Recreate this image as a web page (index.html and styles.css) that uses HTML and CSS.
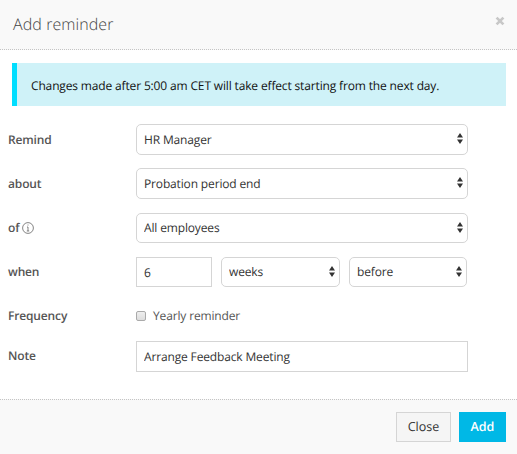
FILE: index.html
```
<!DOCTYPE html>
<html lang="en">

<head>
    <meta charset="UTF-8">
    <meta name="viewport" content="width=device-width, initial-scale=1.0">
    <title>Add reminder</title>
    <link rel="stylesheet" href="styles.css">
</head>

<body>
    <form class="modal">
        <div class="modal-header">
            <h1 class="modal-title">Add reminder</h1>
            <button type="button" class="modal-close" aria-label="Close">
                <svg width="10" height="10" viewBox="0 0 10 10"><path d="M1.6 1.6L8.4 8.4M8.4 1.6L1.6 8.4" stroke="#c8c8c8" stroke-width="2.7"/></svg>
            </button>
        </div>

        <div class="modal-body">
            <div class="alert">Changes made after 5:00 am CET will take effect starting from the next day.</div>

            <div class="row">
                <label class="label" for="remind">Remind</label>
                <div class="select">
                    <select id="remind"><option>HR Manager</option></select>
                    <svg class="arrows" width="6" height="11" viewBox="0 0 6 11"><path d="M0 4.5L3 0L6 4.5ZM0 6.5L3 11L6 6.5Z"/></svg>
                </div>
            </div>
            <div class="row row-about">
                <label class="label" for="about">about</label>
                <div class="select">
                    <select id="about"><option>Probation period end</option></select>
                    <svg class="arrows" width="6" height="11" viewBox="0 0 6 11"><path d="M0 4.5L3 0L6 4.5ZM0 6.5L3 11L6 6.5Z"/></svg>
                </div>
            </div>
            <div class="row row-short">
                <label class="label" for="of">of
                    <svg class="info" width="12" height="12" viewBox="0 0 12 12"><circle cx="6" cy="6" r="5.4"/><path d="M5 5H6V9M4.8 9H7.2M5.5 3H6.5"/></svg>
                </label>
                <div class="select">
                    <select id="of"><option>All employees</option></select>
                    <svg class="arrows" width="6" height="11" viewBox="0 0 6 11"><path d="M0 4.5L3 0L6 4.5ZM0 6.5L3 11L6 6.5Z"/></svg>
                </div>
            </div>
            <div class="row row-short">
                <label class="label" for="when">when</label>
                <div class="when">
                    <input type="text" class="input input-number" id="when" value="6">
                    <div class="select select-unit">
                        <select><option>weeks</option></select>
                        <svg class="arrows" width="6" height="11" viewBox="0 0 6 11"><path d="M0 4.5L3 0L6 4.5ZM0 6.5L3 11L6 6.5Z"/></svg>
                    </div>
                    <div class="select select-side">
                        <select><option>before</option></select>
                        <svg class="arrows" width="6" height="11" viewBox="0 0 6 11"><path d="M0 4.5L3 0L6 4.5ZM0 6.5L3 11L6 6.5Z"/></svg>
                    </div>
                </div>
            </div>
            <div class="row row-frequency">
                <span class="label">Frequency</span>
                <label class="check"><input type="checkbox">Yearly reminder</label>
            </div>
            <div class="row row-note">
                <label class="label" for="note">Note</label>
                <input type="text" class="input" id="note" value="Arrange Feedback Meeting">
            </div>
        </div>

        <div class="modal-footer">
            <button type="button" class="btn">Close</button>
            <button type="button" class="btn btn-primary">Add</button>
        </div>
    </form>
</body>

</html>
```
FILE: styles.css
```
* {
    box-sizing: border-box;
}

body {
    margin: 0;
    background: #fff;
    color: #555;
    font-family: "Open Sans", sans-serif;
    font-size: 12px;
    letter-spacing: -0.15px;
    text-rendering: geometricPrecision;
}

input,
select,
button {
    margin: 0;
    font-family: inherit;
    font-size: 12px;
    letter-spacing: inherit;
    text-rendering: inherit;
}

.modal {
    display: flex;
    flex-direction: column;
    height: 454px;
}

.modal-header {
    display: flex;
    justify-content: space-between;
    height: 50px;
    padding: 12px 12px 0 13px;
    background: #f9f9f9;
    border-bottom: 1px dotted #c4c4c4;
}

.modal-title {
    margin: 0;
    color: #444;
    font-size: 16px;
    font-weight: 300;
    letter-spacing: 0.08px;
    line-height: 24px;
}

.modal-close {
    height: 10px;
    margin-top: 4px;
    padding: 0;
    border: none;
    background: none;
    line-height: 0;
}

.modal-body {
    flex: 1;
    padding: 13px 11px 0 8px;
}

.alert {
    height: 43px;
    margin: 0 0 18px 4px;
    padding-left: 14px;
    border-left: 5px solid #00deff;
    background: #cff2f8;
    color: #111;
    line-height: 45px;
}

.row {
    display: grid;
    grid-template-columns: 128px 332px;
    align-items: start;
    height: 44px;
}

.row-about {
    height: 45px;
}

.row-frequency {
    height: 40px;
}

.label {
    font-weight: 600;
    line-height: 31px;
}

.row-short .label,
.row-note .label {
    line-height: 29px;
}

.row-frequency .label,
.check {
    line-height: 30px;
}

.info {
    vertical-align: -2px;
    fill: none;
    stroke: #666;
    stroke-width: 0.8;
}

.select {
    position: relative;
    height: 31px;
}

.row-short .select {
    height: 30px;
}

.select select {
    appearance: none;
    display: block;
    width: 100%;
    height: 100%;
    padding: 0 7px;
    border: 1px solid #d5d5d5;
    border-radius: 5px;
    background: #fff;
    color: #333;
}

.row-short .select select {
    padding-bottom: 1px;
}

.arrows {
    position: absolute;
    top: 9px;
    right: 5px;
    fill: #333;
}

.when {
    display: flex;
}

.select-unit {
    width: 119px;
    margin: 0 9px;
}

.select-side {
    width: 118px;
}

.input {
    width: 100%;
    height: 31px;
    padding: 0 7px;
    border: 1px solid #d5d5d5;
    color: #333;
}

.input-number {
    width: 76px;
    height: 30px;
}

.check {
    display: flex;
    align-items: center;
}

.check input {
    appearance: none;
    width: 10px;
    height: 10px;
    margin-right: 7px;
    border: 1px solid #aaa;
    border-radius: 2px;
    background: linear-gradient(#eee, #ddd);
}

.modal-footer {
    display: flex;
    justify-content: flex-end;
    gap: 8px;
    height: 55px;
    padding: 12px 11px 0;
    background: #f9f9f9;
    border-top: 1px dotted #c4c4c4;
}

.btn {
    width: 55px;
    height: 30px;
    padding: 0 0 2px;
    border: 1px solid #d5d5d5;
    background: #f5f5f5;
    color: #333;
    font-size: 12.5px;
    letter-spacing: 0;
}

.btn-primary {
    width: 47px;
    border: none;
    background: #00b8e6;
    color: #fff;
    font-weight: 600;
}
```
